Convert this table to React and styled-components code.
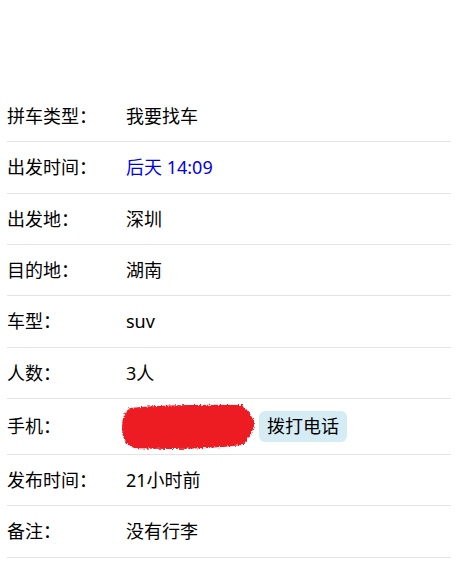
import React from "react";
import styled, { createGlobalStyle } from "styled-components";

const GlobalStyle = createGlobalStyle`
  html, body { margin: 0; padding: 0; background: #fff; }
  body {
    font-family: "Noto Sans", "Noto Sans CJK SC", sans-serif;
    color: #000;
  }
`;

const Page = styled.div`
  padding: 91px 7px 0;
`;

const List = styled.ul`
  list-style: none;
  margin: 0;
  padding: 0;
`;

const Row = styled.li`
  display: flex;
  align-items: center;
  border-bottom: 1px solid #e3e3e3;
  padding: ${(p) => (p.$tall ? "3.5px 0" : "14px 0")};
  font-size: 18px;
  line-height: 22.33px;
`;

const Label = styled.span`
  flex: 0 0 119px;
  color: #000;
`;

const Value = styled.span`
  display: flex;
  align-items: center;
  color: ${(p) => (p.$accent ? "#0000ee" : "#000")};
`;

const Blob = styled.svg`
  display: block;
  width: 136px;
  height: 48px;
  margin-left: -6px;
`;

const CallButton = styled.button`
  margin-left: 3px;
  padding: 4px 8px;
  border: none;
  border-radius: 6px;
  background: #d6ecf5;
  color: #000;
  font: inherit;
  font-size: 18px;
  line-height: 23px;
  cursor: pointer;
`;

const RedactMark = () => (
  <Blob viewBox="0 0 136 48" aria-hidden="true">
    <defs>
      <filter id="rag" x="-10%" y="-20%" width="120%" height="140%">
        <feTurbulence type="fractalNoise" baseFrequency="0.55" numOctaves="2" seed="3" result="n" />
        <feDisplacementMap in="SourceGraphic" in2="n" scale="4" xChannelSelector="R" yChannelSelector="G" result="d" />
        <feGaussianBlur in="d" stdDeviation="0.7" />
      </filter>
    </defs>
    <path
      d="M10 6 Q50 2 122 3 Q130 9 135 22 Q131 34 123 43 Q70 49 13 46 Q2 41 2 26 Q2 11 10 6 Z"
      fill="#ec1c24"
      filter="url(#rag)"
    />
  </Blob>
);

const rows = [
  { label: "拼车类型：", value: "我要找车" },
  { label: "出发时间：", value: "后天 14:09", accent: true },
  { label: "出发地：", value: "深圳" },
  { label: "目的地：", value: "湖南" },
  { label: "车型：", value: "suv" },
  { label: "人数：", value: "3人" },
  { label: "手机：", phone: true },
  { label: "发布时间：", value: "21小时前" },
  { label: "备注：", value: "没有行李" },
];

export default function App() {
  return (
    <>
      <GlobalStyle />
      <Page>
        <List>
          {rows.map((r) => (
            <Row key={r.label} $tall={r.phone}>
              <Label>{r.label}</Label>
              {r.phone ? (
                <Value>
                  <RedactMark />
                  <CallButton type="button">拨打电话</CallButton>
                </Value>
              ) : (
                <Value $accent={r.accent}>{r.value}</Value>
              )}
            </Row>
          ))}
        </List>
      </Page>
    </>
  );
}
